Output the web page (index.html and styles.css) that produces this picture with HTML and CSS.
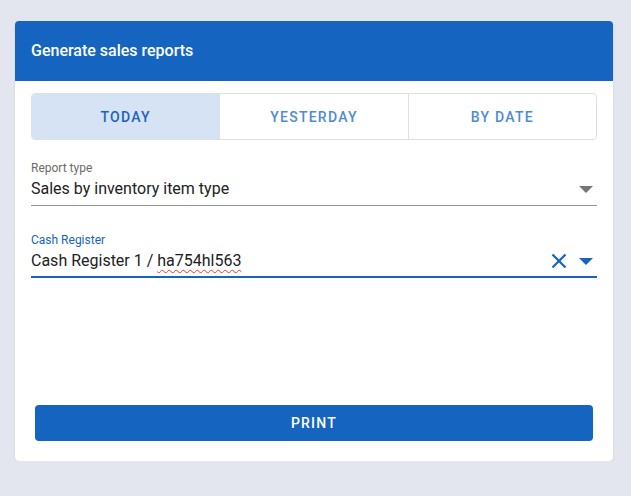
FILE: index.html
```html
<!DOCTYPE html>
<html lang="en">
<head>
<meta charset="utf-8">
<title>Generate sales reports</title>
<link rel="stylesheet" href="styles.css">
</head>
<body>
<div class="card">
  <div class="card-header">Generate sales reports</div>
  <div class="card-body">
    <div class="tabs">
      <div class="tab active">TODAY</div>
      <div class="tab">YESTERDAY</div>
      <div class="tab">BY DATE</div>
    </div>
    <div class="field field-report">
      <div class="label">Report type</div>
      <div class="value-row">
        <div class="value">Sales by inventory item type</div>
        <svg class="arrow" width="14" height="7" viewBox="0 0 14 7"><path d="M0 0h14L7 7z" fill="#757575"/></svg>
      </div>
    </div>
    <div class="field field-register focused">
      <div class="label">Cash Register</div>
      <div class="value-row">
        <div class="value">Cash Register 1 / <span class="misspelled">ha754hl563</span></div>
        <svg class="clear" width="16" height="16" viewBox="0 0 16 16"><path d="M1.5 1.5l13 13M14.5 1.5l-13 13" stroke="#1565c0" stroke-width="2.2" fill="none"/></svg>
        <svg class="arrow" width="14" height="7" viewBox="0 0 14 7"><path d="M0 0h14L7 7z" fill="#1565c0"/></svg>
      </div>
    </div>
    <div class="actions">
      <button class="print">PRINT</button>
    </div>
  </div>
</div>
</body>
</html>
```

FILE: styles.css
```css
* { box-sizing: border-box; }
html, body { margin: 0; padding: 0; }
body {
  background: #e3e6ee;
  font-family: Roboto, "Liberation Sans", Arial, sans-serif;
  padding: 21px 18px 0 15px;
}
.card {
  width: 598px;
  height: 440px;
  background: #fff;
  border-radius: 4px;
  box-shadow: 0 1px 2px rgba(0,0,0,0.12);
  display: flex;
  flex-direction: column;
  overflow: hidden;
}
.card-header {
  height: 60px;
  background: #1565c0;
  color: #fff;
  font-size: 16px;
  font-weight: 500;
  display: flex;
  align-items: center;
  padding-left: 16px;
  padding-bottom: 2px;
}
.card-body {
  flex: 1;
  display: flex;
  flex-direction: column;
  padding: 12px 16px 20px 16px;
}
.tabs {
  display: flex;
  height: 47px;
  border: 1px solid #e0e0e0;
  border-radius: 4px;
  overflow: hidden;
}
.tab {
  flex: 1;
  display: flex;
  align-items: center;
  justify-content: center;
  font-size: 14px;
  font-weight: 500;
  letter-spacing: 1.25px;
  color: #4f8bd2;
}
.tab + .tab { border-left: 1px solid #e0e0e0; }
.tab.active {
  background: #d6e3f4;
  color: #1a62c0;
}
.field {
  border-bottom: 1px solid #949494;
  padding-bottom: 5px;
}
.field-report { margin-top: 20px; }
.field-register { margin-top: 26px; }
.field.focused {
  border-bottom: 2px solid #1565c0;
  padding-bottom: 4px;
}
.label {
  font-size: 12px;
  line-height: 16px;
  color: #6b6b6b;
}
.focused .label { color: #1565c0; }
.value-row {
  display: flex;
  align-items: center;
  height: 24px;
}
.value {
  flex: 1;
  font-size: 16px;
  line-height: 24px;
  padding-top: 1px;
  color: #212121;
}
.misspelled {
  text-decoration: underline wavy #e53935;
  text-decoration-thickness: 1px;
  text-underline-offset: 3px;
}
.arrow { margin-right: 4px; margin-top: 2px; }
.clear { margin-right: 12px; margin-top: 1px; }
.actions {
  margin-top: auto;
  padding: 0 4px;
}
.print {
  width: 100%;
  height: 36px;
  border: none;
  border-radius: 4px;
  background: #1565c0;
  color: #fff;
  font-family: Roboto, "Liberation Sans", Arial, sans-serif;
  font-size: 14px;
  font-weight: 500;
  letter-spacing: 1.25px;
  display: block;
}
```
